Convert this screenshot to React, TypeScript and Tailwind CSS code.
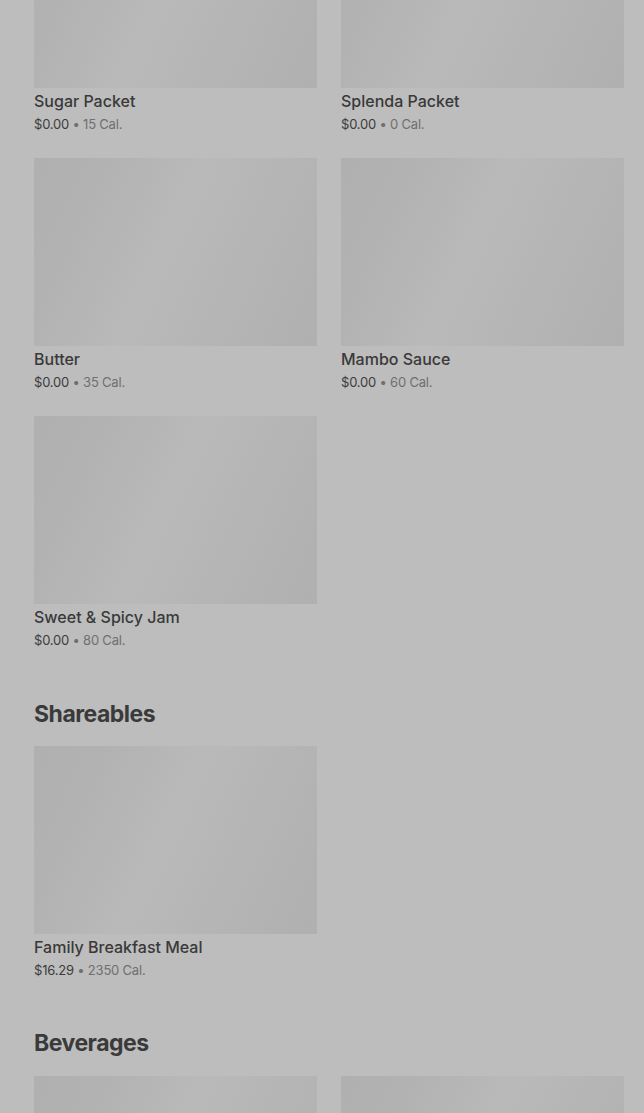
import React from "react";

type Item = { name: string; price: string; cal: string };

const shimmer =
  "bg-[linear-gradient(115deg,#b0b0b0_0%,#b2b2b2_20%,#b9b9b9_45%,#b8b8b8_55%,#b3b3b3_80%,#b0b0b0_100%)]";

function Card({ item }: { item: Item }) {
  return (
    <div className="flex flex-col">
      <div className={`h-[188px] w-full ${shimmer}`} />
      <div className="mt-[3px] text-[16px] leading-[20px] font-medium text-[#393939]">{item.name}</div>
      <div className="mt-[5px] text-[13px] leading-[16px] tracking-[-0.2px] text-[#3c3c3c]">
        {item.price}
        <span className="text-[#6f6f6f]"> • {item.cal}</span>
      </div>
    </div>
  );
}

function Grid({ items }: { items: Item[] }) {
  return (
    <div className="grid grid-cols-2 gap-x-[24px] gap-y-[26px]">
      {items.map((it) => (
        <Card key={it.name} item={it} />
      ))}
    </div>
  );
}

function Heading({ children }: { children: React.ReactNode }) {
  return (
    <h2 className="text-[23px] leading-[28px] font-bold tracking-[-0.5px] text-[#3a3a3a]">{children}</h2>
  );
}

export default function App() {
  const top: Item[] = [
    { name: "Sugar Packet", price: "$0.00", cal: "15 Cal." },
    { name: "Splenda Packet", price: "$0.00", cal: "0 Cal." },
    { name: "Butter", price: "$0.00", cal: "35 Cal." },
    { name: "Mambo Sauce", price: "$0.00", cal: "60 Cal." },
    { name: "Sweet & Spicy Jam", price: "$0.00", cal: "80 Cal." },
  ];
  return (
    <div
      className="h-[1113px] w-[644px] overflow-hidden bg-[#bdbdbd]"
      style={{ fontFamily: "Inter, 'Noto Sans', sans-serif" }}
    >
      <div className="-mt-[100px] pl-[34px] pr-[20px]">
        <Grid items={top} />
        <div className="mt-[52px]">
          <Heading>Shareables</Heading>
        </div>
        <div className="mt-[18px]">
          <Grid items={[{ name: "Family Breakfast Meal", price: "$16.29", cal: "2350 Cal." }]} />
        </div>
        <div className="mt-[51px]">
          <Heading>Beverages</Heading>
        </div>
        <div className="mt-[19px] grid grid-cols-2 gap-x-[24px]">
          <div className={`h-[188px] ${shimmer}`} />
          <div className={`h-[188px] ${shimmer}`} />
        </div>
      </div>
    </div>
  );
}
